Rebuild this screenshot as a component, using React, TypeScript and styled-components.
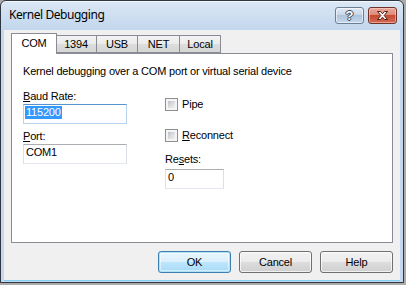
import React from "react";
import styled, { createGlobalStyle, css } from "styled-components";

const Global = createGlobalStyle`
  html, body { margin: 0; padding: 0; }
  body {
    background: #ababab;
    width: 406px;
    height: 285px;
    overflow: hidden;
    font-family: "Liberation Sans", Arial, sans-serif;
    font-size: 11px;
    color: #000;
  }
`;

const Window = styled.div`
  box-sizing: border-box;
  width: 404px;
  height: 283px;
  border: 1px solid #2e3642;
  border-radius: 6px 6px 0 0;
  background: linear-gradient(#dbe7f5, #c3d7ee 28px, #c5d8ee);
  box-shadow: inset 0 1px 0 #f4f8fd;
  display: flex;
  flex-direction: column;
  padding: 0 3px 2px 3px;
`;

const TitleBar = styled.div`
  height: 29px;
  display: flex;
  align-items: flex-start;
  padding: 6px 3px 0 5px;
  box-sizing: border-box;
`;

const Title = styled.div`
  flex: 1;
  font-family: "Noto Sans", "Open Sans", sans-serif;
  font-size: 12px;
  line-height: 16px;
  letter-spacing: -0.45px;
  color: #000;
`;

const CaptionButton = styled.div<{ $close?: boolean }>`
  box-sizing: border-box;
  width: 29px;
  height: 17px;
  border-radius: 3px;
  display: flex;
  align-items: center;
  justify-content: center;
  margin-left: 4px;
  ${(p) =>
    p.$close
      ? css`
          border: 1px solid #6f3329;
          background: linear-gradient(#eaa99b, #dc8a78 45%, #c74a33 50%, #d36a55);
          box-shadow: inset 0 0 0 1px rgba(255, 220, 210, 0.5);
        `
      : css`
          border: 1px solid #6b7e96;
          background: linear-gradient(#e2eaf4, #c9d7e8 45%, #aec3dc 50%, #c6d7ec);
          box-shadow: inset 0 0 0 1px rgba(255, 255, 255, 0.55);
        `}
`;

const HelpGlyph = styled.span`
  font-family: "Liberation Sans", Arial, sans-serif;
  font-weight: bold;
  font-size: 13px;
  line-height: 13px;
  color: #fff;
  text-shadow: 1px 0 0 #3c4656, -1px 0 0 #3c4656, 0 1px 0 #3c4656, 0 -1px 0 #3c4656;
`;

const Client = styled.div`
  flex: 1;
  background: #f0f0f0;
  display: flex;
  flex-direction: column;
  padding: 3px 7px 7px 7px;
  box-sizing: border-box;
  box-shadow: 0 1px 0 #7fcff4;
`;

const TabStrip = styled.div`
  display: flex;
  align-items: flex-end;
  height: 21px;
  margin-bottom: -1px;
  position: relative;
  z-index: 1;
`;

const Tab = styled.div<{ $active?: boolean; $w: number }>`
  box-sizing: border-box;
  width: ${(p) => p.$w}px;
  border: 1px solid #898c95;
  margin-left: -1px;
  &:first-child { margin-left: 0; }
  display: flex;
  justify-content: center;
  line-height: 13px;
  letter-spacing: -0.2px;
  ${(p) =>
    p.$active
      ? css`
          height: 21px;
          background: #fff;
          border-bottom: none;
          padding-top: 3px;
          position: relative;
          z-index: 2;
          margin-right: -1px;
        `
      : css`
          height: 18px;
          margin-bottom: 1px;
          background: linear-gradient(#f3f3f3, #ebebeb 50%, #dddddd 51%, #d6d6d6);
          padding-top: 2px;
        `}
`;

const Panel = styled.div`
  flex: 1;
  background: #fff;
  border: 1px solid #898c95;
  padding: 11px 11px;
  box-sizing: border-box;
  display: flex;
  flex-direction: column;
`;

const Text = styled.div`
  line-height: 13px;
  letter-spacing: -0.2px;
  white-space: nowrap;
`;

const Columns = styled.div`
  display: flex;
  margin-top: 12px;
`;

const Column = styled.div<{ $w?: number; $ml?: number }>`
  display: flex;
  flex-direction: column;
  width: ${(p) => (p.$w ? `${p.$w}px` : "auto")};
  margin-left: ${(p) => p.$ml ?? 0}px;
`;

const Label = styled(Text)<{ $mt?: number }>`
  margin-top: ${(p) => p.$mt ?? 0}px;
`;

const TextBox = styled.div<{ $w: number; $mt?: number; $focus?: boolean }>`
  box-sizing: border-box;
  width: ${(p) => p.$w}px;
  height: 20px;
  margin-top: ${(p) => p.$mt ?? 0}px;
  border: 1px solid;
  border-color: ${(p) =>
    p.$focus ? "#5594d0 #b5d3ee #b5d3ee #b5d3ee" : "#abadb3 #dbdfe6 #e3e9ef #dbdfe6"};
  background: #fff;
  padding: 1px 2px 0 1px;
  line-height: 13px;
  letter-spacing: -0.2px;
  display: flex;
  align-items: flex-start;
`;

const Selected = styled.span`
  background: #3399ff;
  color: #fff;
  padding: 0 1px;
`;

const Plain = styled.span`
  padding: 0 1px;
`;

const CheckRow = styled.div<{ $mt: number }>`
  display: flex;
  align-items: flex-start;
  margin-top: ${(p) => p.$mt}px;
  height: 13px;
`;

const CheckBox = styled.span`
  box-sizing: border-box;
  width: 13px;
  height: 13px;
  border: 1px solid #8e8f8f;
  background: #f4f4f4;
  position: relative;
  flex: none;
  &::after {
    content: "";
    position: absolute;
    left: 2px;
    top: 2px;
    right: 2px;
    bottom: 2px;
    background: linear-gradient(135deg, #bfc3c9, #dcdee1 55%, #f0f0f0);
  }
`;

const CheckLabel = styled(Text)`
  margin-left: 4px;
`;

const Key = styled.span`
  text-decoration: underline;
`;

const ButtonRow = styled.div`
  display: flex;
  justify-content: flex-end;
  gap: 8px;
  margin-top: 8px;
`;

const Button = styled.div<{ $default?: boolean }>`
  box-sizing: border-box;
  width: 73px;
  height: 22px;
  border-radius: 3px;
  display: flex;
  align-items: center;
  justify-content: center;
  letter-spacing: -0.2px;
  ${(p) =>
    p.$default
      ? css`
          border: 1px solid #3c7fb1;
          background: linear-gradient(#eaf6fd, #d9f0fc 50%, #bee6fd 51%, #a7d9f5);
          box-shadow: inset 0 0 0 1px #aee0f8, inset 0 0 0 2px rgba(255, 255, 255, 0.5);
        `
      : css`
          border: 1px solid #707070;
          background: linear-gradient(#f2f2f2, #ebebeb 50%, #dddddd 51%, #cfcfcf);
          box-shadow: inset 0 0 0 1px rgba(255, 255, 255, 0.7);
        `}
`;

const tabs = [
  { label: "COM", w: 46, active: true },
  { label: "1394", w: 42 },
  { label: "USB", w: 42 },
  { label: "NET", w: 43 },
  { label: "Local", w: 42 },
];

export default function App() {
  return (
    <>
      <Global />
      <Window>
        <TitleBar>
          <Title>Kernel Debugging</Title>
          <CaptionButton>
            <HelpGlyph>?</HelpGlyph>
          </CaptionButton>
          <CaptionButton $close>
            <svg width="13" height="11" viewBox="0 0 13 11">
              <path
                d="M1.5 1.5 H4.5 L6.5 3.8 L8.5 1.5 H11.5 L8.2 5.5 L11.5 9.5 H8.5 L6.5 7.2 L4.5 9.5 H1.5 L4.8 5.5 Z"
                fill="#fff"
                stroke="#4a1f17"
                strokeWidth="1"
                strokeLinejoin="round"
              />
            </svg>
          </CaptionButton>
        </TitleBar>
        <Client>
          <TabStrip>
            {tabs.map((t) => (
              <Tab key={t.label} $active={t.active} $w={t.w}>
                {t.label}
              </Tab>
            ))}
          </TabStrip>
          <Panel>
            <Text>Kernel debugging over a COM port or virtual serial device</Text>
            <Columns>
              <Column $w={104}>
                <Label>
                  <Key>B</Key>aud Rate:
                </Label>
                <TextBox $w={104} $mt={1} $focus>
                  <Selected>115200</Selected>
                </TextBox>
                <Label $mt={6}>
                  <Key>P</Key>ort:
                </Label>
                <TextBox $w={104} $mt={1}>
                  <Plain>COM1</Plain>
                </TextBox>
              </Column>
              <Column $ml={38}>
                <CheckRow $mt={8}>
                  <CheckBox />
                  <CheckLabel>Pipe</CheckLabel>
                </CheckRow>
                <CheckRow $mt={18}>
                  <CheckBox />
                  <CheckLabel>
                    <Key>R</Key>econnect
                  </CheckLabel>
                </CheckRow>
                <Label $mt={11}>
                  Re<Key>s</Key>ets:
                </Label>
                <TextBox $w={59} $mt={3}>
                  <Plain>0</Plain>
                </TextBox>
              </Column>
            </Columns>
          </Panel>
          <ButtonRow>
            <Button $default>OK</Button>
            <Button>Cancel</Button>
            <Button>Help</Button>
          </ButtonRow>
        </Client>
      </Window>
    </>
  );
}
